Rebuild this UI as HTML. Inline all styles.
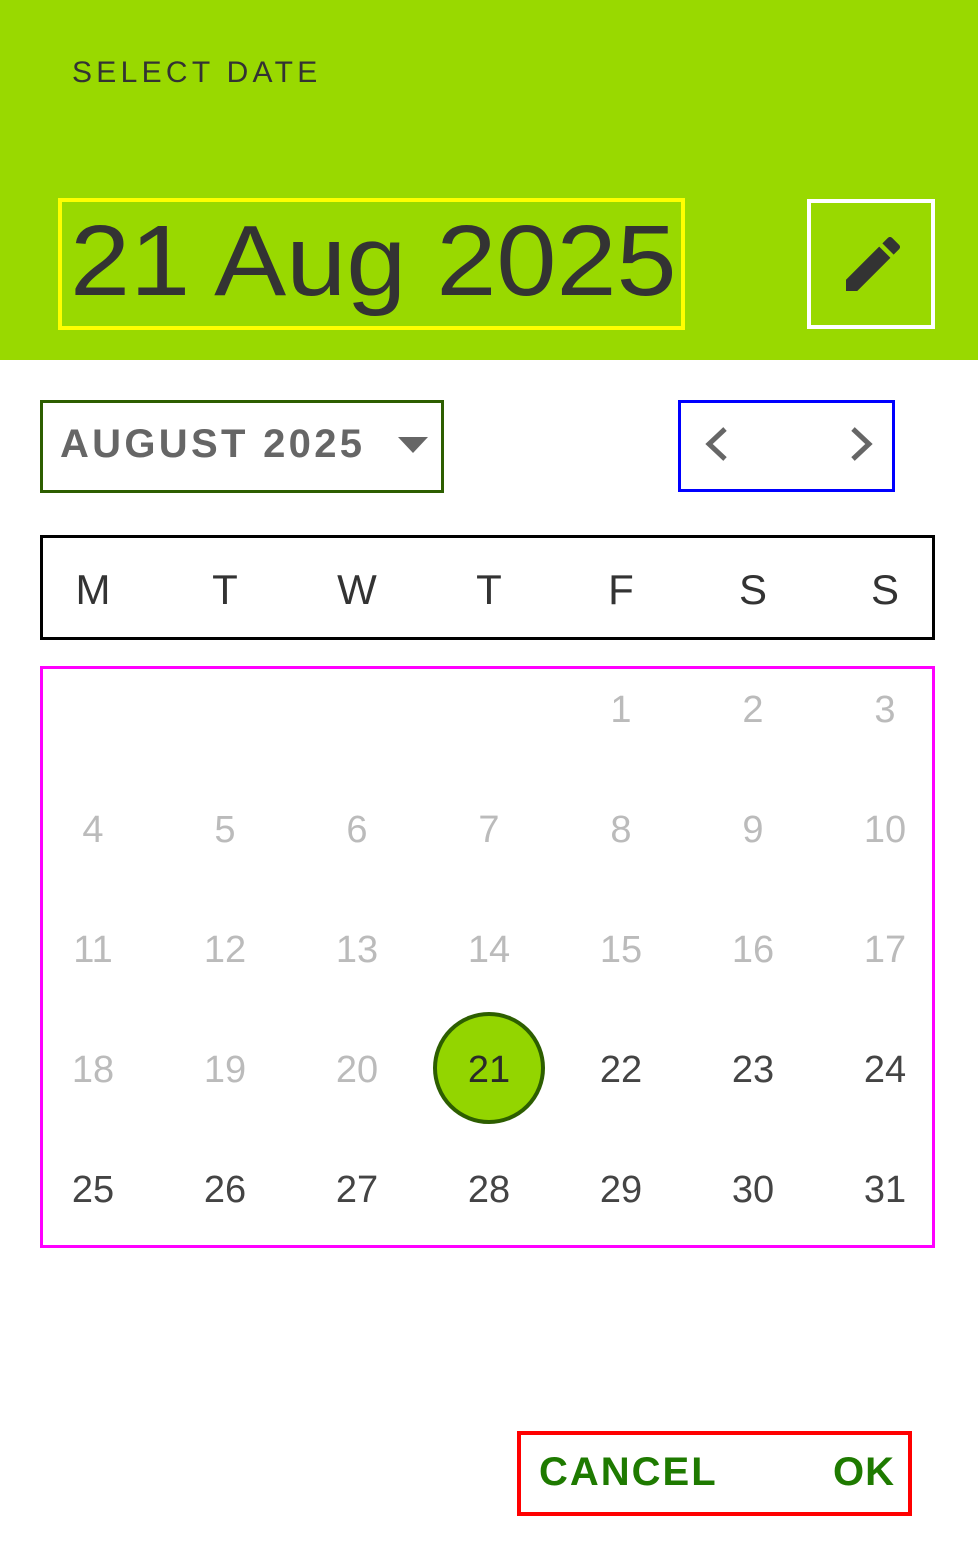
<!DOCTYPE html>
<html><head><meta charset="utf-8"><style>
*{margin:0;padding:0;box-sizing:border-box}
body{width:978px;height:1545px;position:relative;background:#fff;font-family:"Liberation Sans",sans-serif;overflow:hidden}
.a{position:absolute}
.hdr{left:0;top:0;width:978px;height:360px;background:#99d900}
.d{position:absolute;width:132px;text-align:center;font-size:38px;line-height:1;color:#bbb}
.dk{color:#444}
.w{position:absolute;width:132px;text-align:center;font-size:42px;line-height:1;color:#333;top:569px}
</style></head><body>
<div class="a hdr"></div>
<div class="a" style="left:72px;top:58px;font-size:30px;letter-spacing:4.3px;color:#333;line-height:1">SELECT DATE</div>
<div class="a" style="left:58px;top:198px;width:627px;height:132px;border:4px solid #ffff00"></div>
<div class="a" style="left:70px;top:206px;font-size:100px;line-height:1.1;color:#333;transform:scaleX(1.08);transform-origin:0 0;white-space:nowrap">21 Aug 2025</div>
<div class="a" style="left:807px;top:199px;width:128px;height:130px;border:4px solid #fff"></div>
<svg class="a" style="left:0;top:0" width="978" height="1545">
<path transform="translate(837,228) scale(3)" fill="#333" d="M3 17.25V21h3.75L17.81 9.940l-3.75-3.75L3 17.25zM20.71 7.04c.39-.39.39-1.02 0-1.41l-2.34-2.34c-.39-.39-1.020-.39-1.41 0l-1.83 1.83 3.75 3.75 1.830-1.83z"/>
<polygon points="398,437 428,437 413,453" fill="#666"/>
<polyline points="725,429 709,444 725,459" fill="none" stroke="#666" stroke-width="5"/>
<polyline points="853,429 869,444 853,459" fill="none" stroke="#666" stroke-width="5"/>
<circle cx="489" cy="1068" r="54" fill="#93d500" stroke="#2d5e00" stroke-width="4"/>
</svg>
<div class="a" style="left:40px;top:400px;width:404px;height:93px;border:3px solid #2d5e00"></div>
<div class="a" style="left:60px;top:424px;font-size:40px;font-weight:bold;letter-spacing:3.3px;color:#666;line-height:1">AUGUST 2025</div>
<div class="a" style="left:678px;top:400px;width:217px;height:92px;border:3px solid #0000ff"></div>
<div class="a" style="left:40px;top:535px;width:895px;height:105px;border:3px solid #000"></div>
<div class="w" style="left:27px">M</div><div class="w" style="left:159px">T</div><div class="w" style="left:291px">W</div><div class="w" style="left:423px">T</div><div class="w" style="left:555px">F</div><div class="w" style="left:687px">S</div><div class="w" style="left:819px">S</div>
<div class="a" style="left:40px;top:666px;width:895px;height:582px;border:3px solid #ff00ff"></div>
<div class="d" style="left:555px;top:691px">1</div><div class="d" style="left:687px;top:691px">2</div><div class="d" style="left:819px;top:691px">3</div>
<div class="d" style="left:27px;top:811px">4</div><div class="d" style="left:159px;top:811px">5</div><div class="d" style="left:291px;top:811px">6</div><div class="d" style="left:423px;top:811px">7</div><div class="d" style="left:555px;top:811px">8</div><div class="d" style="left:687px;top:811px">9</div><div class="d" style="left:819px;top:811px">10</div>
<div class="d" style="left:27px;top:931px">11</div><div class="d" style="left:159px;top:931px">12</div><div class="d" style="left:291px;top:931px">13</div><div class="d" style="left:423px;top:931px">14</div><div class="d" style="left:555px;top:931px">15</div><div class="d" style="left:687px;top:931px">16</div><div class="d" style="left:819px;top:931px">17</div>
<div class="d" style="left:27px;top:1051px">18</div><div class="d" style="left:159px;top:1051px">19</div><div class="d" style="left:291px;top:1051px">20</div><div class="d" style="left:423px;top:1051px;color:#2a2a2a">21</div><div class="d dk" style="left:555px;top:1051px">22</div><div class="d dk" style="left:687px;top:1051px">23</div><div class="d dk" style="left:819px;top:1051px">24</div>
<div class="d dk" style="left:27px;top:1171px">25</div><div class="d dk" style="left:159px;top:1171px">26</div><div class="d dk" style="left:291px;top:1171px">27</div><div class="d dk" style="left:423px;top:1171px">28</div><div class="d dk" style="left:555px;top:1171px">29</div><div class="d dk" style="left:687px;top:1171px">30</div><div class="d dk" style="left:819px;top:1171px">31</div>
<div class="a" style="left:517px;top:1431px;width:395px;height:85px;border:4px solid #ff0000"></div>
<div class="a" style="left:539px;top:1452px;font-size:40px;font-weight:bold;letter-spacing:2px;color:#1e7a00;line-height:1">CANCEL</div>
<div class="a" style="left:833px;top:1452px;font-size:40px;font-weight:bold;letter-spacing:1px;color:#1e7a00;line-height:1">OK</div>
</body></html>
